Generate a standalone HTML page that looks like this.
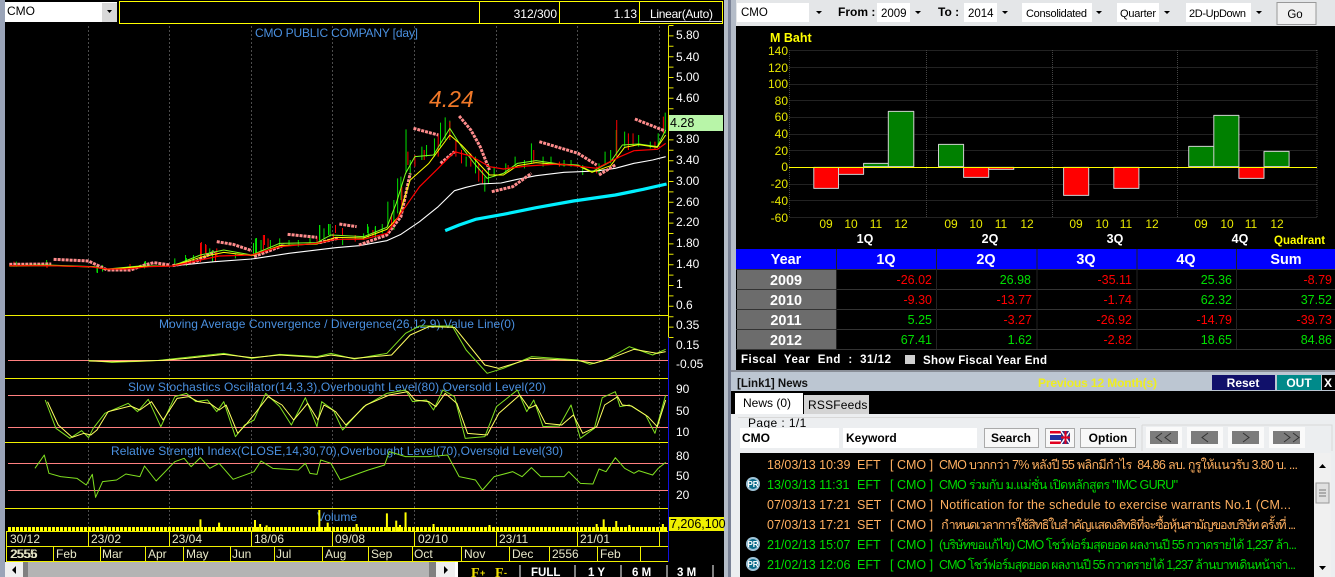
<!DOCTYPE html>
<html><head><meta charset="utf-8"><style>
html,body{margin:0;padding:0;background:#000;width:1335px;height:577px;overflow:hidden}
svg{display:block}
text{font-family:"Liberation Sans","Noto Sans CJK SC",sans-serif;font-size:12px;white-space:pre}
.n{vector-effect:non-scaling-stroke;fill:none;stroke-linejoin:round}
.ax{fill:#fff}
.bl{fill:#4a90e0}
.yl{fill:#ffff00}
.dt{fill:#e8e8c8}
.th text{fill:#fff;font-weight:bold;font-size:14.4px;text-anchor:middle}
.r{fill:#ff0000;font-size:12.5px;text-anchor:end}
.g{fill:#00e000;font-size:12.5px;text-anchor:end}
.o{fill:#ffb060;font-size:12.5px}
.m{fill:#00dc00;font-size:12.5px}
.tb{fill:#000;font-size:11px}
.b{fill:#000;font-weight:bold;font-size:12px}
.qy text{fill:#e8e800;font-size:12px;text-anchor:middle}
.q text{fill:#fff;font-weight:bold;font-size:12.5px;text-anchor:middle}
</style></head><body>
<svg width="1335" height="577" viewBox="0 0 1335 577" xmlns="http://www.w3.org/2000/svg">
<rect width="1335" height="577" fill="#000"/>
<!-- frame -->
<rect x="0" y="0" width="5" height="577" fill="#9aa4b8"/>
<rect x="724" y="0" width="12" height="577" fill="#b4bcc8"/>
<rect x="728" y="0" width="3" height="577" fill="#7a8296"/>

<!-- LEFT TOP -->
<rect x="5" y="2" width="112" height="20" fill="#fff"/>
<rect x="102" y="3" width="15" height="19" fill="#d8d8d8"/>
<path d="M107 10h5l-2.500 3z" fill="#000"/>
<text x="7" y="15" class="tb" style="font-size:12px">CMO</text>
<rect x="119.500" y="1.500" width="603" height="22" fill="#000" stroke="#ffff00"/>
<path d="M479.500 2V23M559.500 2V23M639.500 2V23" stroke="#ffff00"/>
<text x="557" y="18" fill="#fff" text-anchor="end">312/300</text>
<text x="637" y="18" fill="#fff" text-anchor="end">1.13</text>
<text x="650" y="18" fill="#fff" textLength="63">Linear(Auto)</text>
<path d="M640 21.500H722" stroke="#ddd"/>

<!-- vertical dotted grid -->
<path d="M88.500 26V531M169.500 26V531M251.500 26V531M332.500 26V531M414.500 26V531M496.500 26V531M577.500 26V531M659.500 26V531" stroke="#4c4c4c" stroke-dasharray="2 2"/>
<text x="255" y="37" class="bl" textLength="163">CMO PUBLIC COMPANY [day]</text>
<text x="429" y="107" fill="#f07828" style="font-size:23px;font-style:italic">4.24</text>

<!-- axis -->
<path d="M668.500 26V337" stroke="#e8e800"/>
<path d="M668.500 337V562" stroke="#1010e0"/>
<path d="M671 25V338" stroke="#e8e800" stroke-width="5" stroke-dasharray="1 9.4"/>
<g class="ax">
<text x="676" y="39">5.80</text><text x="676" y="61">5.40</text><text x="676" y="81">5.00</text><text x="676" y="102">4.60</text>
<text x="676" y="143">3.80</text><text x="676" y="164">3.40</text><text x="676" y="185">3.00</text><text x="676" y="206">2.60</text><text x="676" y="226">2.20</text><text x="676" y="247">1.80</text><text x="676" y="268">1.40</text><text x="676" y="288">1</text><text x="676" y="309">0.6</text>
<text x="676" y="329">0.35</text><text x="676" y="349">0.15</text><text x="676" y="368">-0.05</text>
<text x="676" y="393">90</text><text x="676" y="415">50</text><text x="676" y="436">10</text>
<text x="676" y="460">80</text><text x="676" y="480">50</text><text x="676" y="499">20</text>
</g>
<rect x="669" y="115" width="54" height="16" fill="#b8f5a8"/>
<text x="670" y="127" fill="#000" style="font-size:12.500px">4.28</text>

<!-- extra low-range candles in px -->
<path d="M97.500 268V273M256.500 238V255M253.500 243V256M319.500 225V240M328.500 224V235M367.500 224V233M375.500 226V238M212.500 250V262M186.500 258V266M145.500 261V267" stroke="#00e000"/>
<path d="M200.500 243V262M205.500 244V253M264.500 235V245M335.500 225V233M342.500 228V236M215.500 252V262M47 262V268M130 264V272" stroke="#ff0000"/>

<!-- price chart in zoom coords -->
<g transform="scale(.46616,.33333)">
<path class="n" stroke="#00e000" d="M35 785V800M100 780V798M208 800V818M220 795V815M310 785V805M375 775V795M398 765V790M415 765V785M450 745V765M505 760V775M548 715V765M560 720V760M580 720V750M600 715V740M620 720V735M640 720V740M665 705V730M686 675V725M695 685V715M708 672V710M735 715V735M780 700V720M790 680V715M805 680V712M820 672V700M832 605V680M845 600V690M853 535V640M860 530V600M871 388V520M880 480V530M905 440V480M915 435V470M932 415V470M945 368V440M955 352V420M965 362V400M1000 470V500M1020 470V520M1040 530V575M1048 490V550M1060 500V530M1085 490V520M1105 470V500M1125 480V505M1140 430V490M1165 470V500M1182 470V495M1210 480V500M1225 480V500M1250 495V525M1285 490V520M1298 455V495M1310 450V490M1322 390V460M1340 395V440M1370 405V440M1395 425V445M1412 400V440M1427 338V400"/>
<path class="n" stroke="#ff0000" d="M30 785V800M432 726V775M442 735V765M465 745V770M565 705V750M575 715V745M680 710V730M715 700V720M762 705V725M800 690V710M840 640V680M862 560V620M875 455V495M890 465V500M910 450V480M940 400V470M965 365V420M978 420V470M990 450V490M1010 460V500M1027 490V545M1035 510V550M1090 495V515M1145 450V490M1200 485V500M1280 500V520M1323 360V470M1348 400V450M1358 400V440M1405 425V450M1423 350V400"/>
<path class="n" stroke="#fff" stroke-width="1.100" d="M370 798 460 785 540 777 620 760 720 743 770 737 830 722 860 703 900 665 940 620 975 572 1000 562 1030 552 1075 549 1110 538 1150 527 1210 517 1280 513 1320 505 1360 490 1400 480 1428 470"/>
<path class="n" stroke="#00f0ff" stroke-width="3.200" d="M955 692 985 675 1020 658 1080 643 1150 623 1230 603 1320 585 1380 568 1430 552"/>
<path class="n" stroke="#ff8c8c" stroke-width="3" stroke-dasharray="3 1" d="M20 793 110 792M115 778 190 783 230 810 280 810 310 795 330 788 365 795M370 797 420 785 460 755M465 725 500 733 540 752M545 770 610 735M617 703 680 712M685 728 725 715M728 672 765 680M770 735 830 705 860 650 880 520M887 385 940 405M945 490 975 455M985 348 1010 390 1030 440 1050 510M1055 575 1100 560 1140 520M1157 425 1240 460 1280 495M1285 525 1320 495M1362 357 1425 392"/>
<path class="n" stroke="#80ff20" stroke-width="1" d="M20 797 100 795 200 800 230 807 300 798 370 798 430 765 480 750 540 765 600 730 680 728 710 705 780 710 830 682 850 610 870 520 890 470 930 465 965 385 990 440 1020 495 1045 535 1080 520 1110 490 1150 482 1200 492 1240 495 1270 515 1310 485 1335 435 1370 432 1410 440 1428 390"/>
<path class="n" stroke="#ffff00" stroke-width="1" d="M20 798 100 797 200 801 230 808 300 800 370 798 430 772 480 757 540 767 600 737 680 732 720 712 780 714 830 688 855 650 880 540 920 490 965 405 990 435 1020 480 1050 525 1080 525 1110 497 1150 488 1200 494 1240 497 1270 517 1310 497 1340 442 1370 434 1410 442 1428 405"/>
<path class="n" stroke="#ff0000" stroke-width="1.200" d="M20 797 100 797 190 800 230 807 270 807 320 800 370 798 430 780 470 768 540 765 600 740 680 730 720 718 780 718 830 700 860 640 900 560 940 505 975 455 1010 468 1050 500 1080 507 1130 498 1200 492 1280 505 1330 470 1360 452 1410 448 1428 430"/>
</g>

<!-- indicators -->
<path d="M5 315.500H668M5 378.500H668M5 442.500H668M5 508.500H668" stroke="#f0f000"/>
<path d="M8 360.500H668M8 395.500H668M8 427.500H668M8 463.500H668M8 490.500H668" stroke="#ff8080"/>
<text x="159" y="328" class="bl" textLength="356">Moving Average Convergence / Divergence(26,12,9),Value Line(0)</text>
<text x="128" y="391" class="bl" textLength="418">Slow Stochastics Oscillator(14,3,3),Overbought Level(80),Oversold Level(20)</text>
<text x="111" y="455" class="bl" textLength="452">Relative Strength Index(CLOSE,14,30,70),Overbought Level(70),Oversold Level(30)</text>
<text x="317" y="521" class="bl">Volume</text>

<g transform="translate(0,300) scale(.46616,.33333)">
<path class="n" stroke="#80e020" d="M190 181 240 187 300 184 340 181 400 172 480 160 540 175 600 163 680 170 710 160 760 177 830 160 870 100 900 78 970 78 1000 150 1045 220 1080 205 1140 170 1240 180 1265 193 1300 180 1350 140 1400 165 1428 148"/>
<path class="n" stroke="#ffff60" d="M190 183 240 185 300 183 350 181 400 175 480 163 540 173 600 165 680 172 710 165 760 175 840 165 880 105 920 80 975 82 1040 195 1070 205 1140 175 1240 182 1275 190 1310 175 1360 148 1410 160 1428 155"/>
<path class="n" stroke="#80e020" d="M97 300 120 385 150 415 175 392 190 413 200 385 225 340 275 310 295 335 318 298 345 380 375 290 400 280 420 305 445 300 465 335 480 305 505 410 525 375 545 360 570 280 600 320 625 375 655 293 680 380 690 305 715 330 735 390 780 320 830 280 870 270 885 305 915 300 930 330 950 270 975 290 998 415 1040 410 1065 320 1110 270 1130 335 1145 300 1165 380 1200 378 1225 315 1245 415 1275 385 1292 293 1320 275 1330 320 1350 315 1385 345 1405 400 1428 285"/>
<path class="n" stroke="#ffff60" d="M102 305 125 375 155 412 180 400 195 405 208 390 232 335 280 318 300 330 325 305 350 360 380 295 405 290 425 305 450 310 470 330 485 315 510 400 530 370 550 335 575 290 605 315 630 360 660 310 682 360 695 315 720 335 742 375 785 315 835 285 875 275 890 300 920 305 935 320 955 280 980 310 1003 400 1045 405 1070 340 1115 285 1135 325 1150 315 1170 370 1205 375 1230 345 1250 400 1280 380 1297 315 1325 290 1335 315 1355 318 1390 350 1410 380 1428 300"/>
<path class="n" stroke="#80e020" d="M75 505 95 465 105 520 130 530 165 535 185 555 198 523 205 592 220 545 250 540 270 522 300 530 310 498 335 543 375 485 395 475 410 500 430 473 450 505 470 490 500 538 545 515 560 483 585 505 640 510 655 490 665 520 680 523 688 480 710 490 730 540 760 525 790 510 825 495 835 455 870 470 920 470 960 465 985 530 1020 540 1035 570 1060 530 1100 515 1120 530 1140 503 1160 530 1210 530 1220 515 1245 550 1272 552 1285 507 1300 515 1320 473 1340 505 1360 520 1370 512 1400 525 1412 505 1428 487"/>
<path class="n" stroke="#ffff00" stroke-width="2" d="M430 693V658M547 693V660M558 693V672M572 693V676M685 693V630M703 693V668M765 693V672M830 693V640M850 693V662M858 693V675M870 693V637M930 693V672M1050 693V675M1280 693V672M1295 693V658M1322 693V663M1350 693V675M1422 693V672M470 693V668M225 693V680"/>
</g>
<path d="M8 529H668" stroke="#ffff00" stroke-width="4" stroke-dasharray="3 1"/>
<rect x="669" y="517" width="55" height="14" fill="#f0f000"/>
<text x="670" y="528" fill="#000" style="font-size:12.500px">7,206,100</text>

<!-- dates -->
<path d="M6 531.500H668M6 546.500H668M6 561.500H668" stroke="#f0f000"/>
<path d="M6.500 532V561M88.500 532V546M169.500 532V546M251.500 532V546M332.500 532V546M414.500 532V546M496.500 532V546M577.500 532V546M659.500 532V546M53.500 547V561M100.500 547V561M145.500 547V561M183.500 547V561M230.500 547V561M274.500 547V561M322.500 547V561M368.500 547V561M412.500 547V561M461.500 547V561M509.500 547V561M549.500 547V561M597.500 547V561M640.500 547V561" stroke="#f0f000"/>
<g class="dt">
<text x="10" y="543">30/12</text><text x="91" y="543">23/02</text><text x="172" y="543">23/04</text><text x="254" y="543">18/06</text><text x="335" y="543">09/08</text><text x="418" y="543">02/10</text><text x="499" y="543">23/11</text><text x="580" y="543">21/01</text>
<text x="10" y="558">2555</text><text x="11" y="558">2556</text><text x="56" y="558">Feb</text><text x="102" y="558">Mar</text><text x="148" y="558">Apr</text><text x="186" y="558">May</text><text x="232" y="558">Jun</text><text x="276" y="558">Jul</text><text x="325" y="558">Aug</text><text x="371" y="558">Sep</text><text x="414" y="558">Oct</text><text x="464" y="558">Nov</text><text x="512" y="558">Dec</text><text x="552" y="558">2556</text><text x="600" y="558">Feb</text>
</g>

<!-- bottom scrollbar -->
<rect x="5" y="562" width="452" height="15" fill="#b4b4b4"/>
<rect x="5" y="562" width="18" height="15" fill="#efefef"/>
<rect x="23" y="562" width="5" height="15" fill="#808080"/>
<path d="M16 566v8l-4-4z" fill="#000"/>
<rect x="429" y="562" width="7" height="15" fill="#808080"/>
<rect x="436" y="562" width="19" height="15" fill="#efefef"/>
<path d="M444 566v8l4-4z" fill="#000"/>
<rect x="455" y="562" width="3" height="15" fill="#fff"/>
<rect x="458" y="562" width="266" height="15" fill="#000"/>
<text x="471" y="577" fill="#f0e000" style="font-family:'Liberation Serif',serif;font-size:14px;font-weight:bold">F</text><text x="480" y="576" fill="#f0e000" style="font-size:9px;font-weight:bold">+</text>
<text x="495" y="577" fill="#f0e000" style="font-family:'Liberation Serif',serif;font-size:14px;font-weight:bold">F</text><text x="504" y="576" fill="#f0e000" style="font-size:9px;font-weight:bold">-</text>
<path d="M520 565V577M575 565V577M621 565V577M667 565V577M713 565V577" stroke="#fff"/>
<text x="531" y="576" fill="#fff" style="font-size:11.500px;font-weight:bold">FULL</text><text x="588" y="576" fill="#fff" style="font-size:11.500px;font-weight:bold">1 Y</text><text x="632" y="576" fill="#fff" style="font-size:11.500px;font-weight:bold">6 M</text><text x="677" y="576" fill="#fff" style="font-size:11.500px;font-weight:bold">3 M</text>

<!-- RIGHT TOOLBAR -->
<rect x="736" y="0" width="599" height="26" fill="#e4e6e8"/>
<g fill="#fff"><rect x="737" y="3" width="72" height="19"/><rect x="877" y="3" width="33" height="19"/><rect x="964" y="3" width="33" height="19"/><rect x="1022" y="3" width="70" height="19"/><rect x="1117" y="3" width="42" height="19"/><rect x="1186" y="3" width="65" height="19"/></g>
<g fill="#000"><path d="M816 11h6l-3 3zM915 11h6l-3 3zM1002 11h6l-3 3zM1096 11h6l-3 3zM1164 11h6l-3 3zM1256 11h6l-3 3z"/></g>
<text x="741" y="16" class="tb" style="font-size:11.500px">CMO</text>
<text x="838" y="16" class="b">From :</text><text x="938" y="16" class="b">To :</text>
<text x="881" y="17" class="tb" style="font-size:11.500px">2009</text><text x="968" y="17" class="tb" style="font-size:11.500px">2014</text><text x="1026" y="17" class="tb" textLength="61">Consolidated</text><text x="1120" y="17" class="tb" textLength="36">Quarter</text><text x="1189" y="17" class="tb" textLength="57">2D-UpDown</text>
<rect x="1277" y="2.500" width="39" height="22" fill="#f0f0f0" stroke="#999"/>
<text x="1295" y="18" class="tb" text-anchor="middle" style="font-size:11.500px">Go</text>

<!-- BAR CHART -->
<rect x="736" y="26" width="599" height="223" fill="#000"/>
<text x="770" y="42" fill="#ffff00" style="font-weight:bold;font-size:12.500px">M Baht</text>
<path d="M789.500 50.500H1317M789.500 67.500H1317M789.500 84.500H1317M789.500 100.500H1317M789.500 117.500H1317M789.500 134.500H1317M789.500 150.500H1317M789.500 184.500H1317M789.500 200.500H1317M789.500 217.500H1317M789.500 50V217M926.500 50V217M1052.500 50V217M1177.500 50V217M1317 50V217" stroke="#444" stroke-dasharray="1 1"/>
<text x="788" y="55" fill="#e8e800" text-anchor="end">140</text><text x="788" y="72" fill="#e8e800" text-anchor="end">120</text><text x="788" y="88" fill="#e8e800" text-anchor="end">100</text><text x="788" y="105" fill="#e8e800" text-anchor="end">80</text><text x="788" y="121" fill="#e8e800" text-anchor="end">60</text><text x="788" y="138" fill="#e8e800" text-anchor="end">40</text><text x="788" y="155" fill="#e8e800" text-anchor="end">20</text><text x="788" y="171" fill="#e8e800" text-anchor="end">0</text><text x="788" y="188" fill="#e8e800" text-anchor="end">-20</text><text x="788" y="205" fill="#e8e800" text-anchor="end">-40</text><text x="788" y="222" fill="#e8e800" text-anchor="end">-60</text>
<g transform="translate(730,0) scale(.38611,.33333)" stroke="#d0d0d0" stroke-width="1">
<path class="n" style="fill:#ff0000" d="M217 502H281V565H217ZM281 502H346V523H281ZM605 502H670V532H605ZM670 502H735V508H670ZM864 502H929V586H864ZM994 502H1059V565H994ZM1318 502H1383V535H1318Z"/>
<path class="n" style="fill:#008000" d="M346 490H410V500H346ZM410 334H476V500H410ZM540 433H605V500H540ZM1188 439H1253V500H1188ZM1253 346H1318V500H1253ZM1383 454H1448V500H1383Z"/>
</g>
<path d="M789 167.500H1317" stroke="#ffff00"/>
<g class="qy">
<text x="826" y="228">09</text><text x="851" y="228">10</text><text x="876" y="228">11</text><text x="901" y="228">12</text>
<text x="951" y="228">09</text><text x="976" y="228">10</text><text x="1001" y="228">11</text><text x="1027" y="228">12</text>
<text x="1076" y="228">09</text><text x="1102" y="228">10</text><text x="1126" y="228">11</text><text x="1152" y="228">12</text>
<text x="1201" y="228">09</text><text x="1227" y="228">10</text><text x="1251" y="228">11</text><text x="1277" y="228">12</text>
</g>
<g class="q"><text x="865" y="243">1Q</text><text x="990" y="243">2Q</text><text x="1115" y="243">3Q</text><text x="1240" y="243">4Q</text></g>
<text x="1274" y="244" fill="#ffff00" style="font-weight:bold;font-size:11.500px">Quadrant</text>

<!-- TABLE -->
<rect x="736" y="249" width="599" height="20" fill="#0000ff"/>
<rect x="737" y="269" width="99" height="80" fill="#6c6c6c"/>
<path d="M736 269.500H1335M736 289.500H1335M736 309.500H1335M736 329.500H1335M736 349.500H1335" stroke="#333"/>
<path d="M836.500 249V349M936.500 249V349M1037 249V349M1137 249V349M1236.500 249V349" stroke="#222"/>
<g class="th"><text x="786" y="264">Year</text><text x="886" y="264">1Q</text><text x="986" y="264">2Q</text><text x="1086" y="264">3Q</text><text x="1186" y="264">4Q</text><text x="1286" y="264">Sum</text>
<text x="786" y="285">2009</text><text x="786" y="305">2010</text><text x="786" y="325">2011</text><text x="786" y="345">2012</text></g>
<text x="932" y="284" class="r">-26.02</text><text x="1031" y="284" class="g">26.98</text><text x="1132" y="284" class="r">-35.11</text><text x="1232" y="284" class="g">25.36</text><text x="1332" y="284" class="r">-8.79</text>
<text x="932" y="304" class="r">-9.30</text><text x="1032" y="304" class="r">-13.77</text><text x="1132" y="304" class="r">-1.74</text><text x="1232" y="304" class="g">62.32</text><text x="1332" y="304" class="g">37.52</text>
<text x="932" y="324" class="g">5.25</text><text x="1032" y="324" class="r">-3.27</text><text x="1132" y="324" class="r">-26.92</text><text x="1232" y="324" class="r">-14.79</text><text x="1332" y="324" class="r">-39.73</text>
<text x="932" y="344" class="g">67.41</text><text x="1032" y="344" class="g">1.62</text><text x="1132" y="344" class="r">-2.82</text><text x="1232" y="344" class="g">18.65</text><text x="1332" y="344" class="g">84.86</text>
<text x="741" y="363" fill="#fff" style="font-size:11.500px;font-weight:bold" textLength="150">Fiscal  Year  End  :  31/12</text>
<rect x="905" y="355" width="10" height="9" fill="#d0d0d0"/>
<text x="923" y="364" fill="#fff" style="font-size:11.500px;font-weight:bold" textLength="124">Show Fiscal Year End</text>
<rect x="731" y="370" width="604" height="2" fill="#8a8f98"/>

<!-- NEWS HEADER -->
<rect x="731" y="372" width="604" height="19" fill="#bcc6d2"/>
<text x="737" y="387" fill="#111" style="font-weight:bold;font-size:11.500px">[Link1] News</text>
<text x="1038" y="387" fill="#eeee20" style="font-weight:bold;font-size:12px" textLength="119">Previous 12 Month(s)</text>
<rect x="1212" y="375" width="63" height="15" fill="#10106a"/>
<text x="1243" y="387" fill="#fff" text-anchor="middle" style="font-weight:bold;font-size:12px">Reset</text>
<rect x="1277" y="375" width="44" height="15" fill="#008a8a"/>
<text x="1299" y="387" fill="#fff" text-anchor="middle" style="font-weight:bold;font-size:12px">OUT</text>
<rect x="1322" y="375" width="13" height="15" fill="#000"/>
<text x="1324" y="387" fill="#fff" style="font-weight:bold;font-size:12px">X</text>

<!-- TABS -->
<rect x="731" y="391" width="604" height="23" fill="#000"/>
<rect x="735" y="393" width="68" height="21" fill="#fff"/>
<rect x="804" y="395" width="65" height="19" fill="#d4d4d4"/>
<text x="743" y="407" fill="#000" style="font-size:12px">News (0)</text>
<text x="808" y="409" fill="#000" style="font-size:12px;letter-spacing:.2px">RSSFeeds</text>

<!-- NEWS PANEL -->
<rect x="731" y="414" width="604" height="163" fill="#eceef0"/>
<path d="M738 417.500H1140M1142 425V451M1142 425H1332V451" stroke="#d8d8d8" fill="none"/>
<text x="748" y="427" fill="#000" style="font-size:12px;letter-spacing:.4px">Page : 1/1</text>
<rect x="740" y="428" width="99" height="20" fill="#fff"/>
<rect x="843" y="428" width="134" height="20" fill="#fff"/>
<text x="742" y="442" class="b">CMO</text>
<text x="846" y="442" class="b">Keyword</text>
<rect x="984.500" y="428.500" width="54" height="19" fill="#f8f8f8" stroke="#aaa"/>
<text x="1011" y="442" class="b" text-anchor="middle">Search</text>
<rect x="1045.500" y="428.500" width="29" height="19" fill="#f8f8f8" stroke="#aaa"/>
<rect x="1050" y="431" width="20" height="13" fill="#e00020"/>
<rect x="1050" y="433.500" width="20" height="8" fill="#fff"/>
<rect x="1050" y="435" width="20" height="5" fill="#2030a0"/>
<rect x="1061" y="431" width="9" height="13" fill="#303080"/>
<path d="M1061 431l9 13M1070 431l-9 13" stroke="#fff" stroke-width="1.500"/>
<path d="M1065.500 431v13M1061 437.500h9" stroke="#e00020" stroke-width="2"/>
<rect x="1080.500" y="428.500" width="55" height="19" fill="#f8f8f8" stroke="#aaa"/>
<text x="1108" y="442" class="b" text-anchor="middle">Option</text>
<g fill="#fafafa"><rect x="1146" y="427" width="36" height="21"/><rect x="1187" y="427" width="36" height="21"/><rect x="1228" y="427" width="36" height="21"/><rect x="1269" y="427" width="36" height="21"/></g>
<g fill="#7c7c7c"><rect x="1150" y="431" width="28" height="13"/><rect x="1191" y="431" width="27" height="13"/><rect x="1232" y="431" width="27" height="13"/><rect x="1273" y="431" width="27" height="13"/></g>
<path d="M1162 433l-6 4.500 6 4.500M1171 433l-6 4.500 6 4.500M1208 433l-6 4.500 6 4.500M1243 433l6 4.500-6 4.500M1284 433l6 4.500-6 4.500M1293 433l6 4.500-6 4.500" fill="none" stroke="#333"/>

<!-- NEWS LIST -->
<rect x="740" y="453" width="574" height="124" fill="#000"/>
<rect x="1314" y="453" width="17" height="124" fill="#f0f0f0"/>
<path d="M1319 468h7l-3.500-4zM1319 566h7l-3.500 4z" fill="#000"/>
<rect x="1316" y="483" width="13" height="20" fill="#e0e0e0" stroke="#999"/>
<path d="M1319 490h7M1319 493h7M1319 496h7" stroke="#777"/>
<text x="767" y="469" class="o">18/03/13 10:39</text><text x="857" y="469" class="o">EFT</text><text x="890" y="469" class="o">[ CMO ]</text><text x="939" y="469" class="o" textLength="359">CMO บวกกว่า 7% หลังปี 55 พลิกมีกำไร  84.86 ลบ. กูรูให้แนวรับ 3.80 บ. ...</text>
<text x="767" y="489" class="m">13/03/13 11:31</text><text x="857" y="489" class="m">EFT</text><text x="890" y="489" class="m">[ CMO ]</text><text x="939" y="489" class="m" textLength="239">CMO ร่วมกับ ม.แม่ชั่น เปิดหลักสูตร "IMC GURU"</text>
<text x="767" y="509" class="o">07/03/13 17:21</text><text x="857" y="509" class="o">SET</text><text x="890" y="509" class="o">[ CMO ]</text><text x="940" y="509" class="o" textLength="351">Notification for the schedule to exercise warrants No.1 (CM...</text>
<text x="767" y="529" class="o">07/03/13 17:21</text><text x="857" y="529" class="o">SET</text><text x="890" y="529" class="o">[ CMO ]</text><text x="940" y="529" class="o" textLength="355">กำหนดเวลาการใช้สิทธิใบสำคัญแสดงสิทธิที่จะซื้อหุ้นสามัญของบริษัท ครั้งที่ ...</text>
<text x="767" y="549" class="m">21/02/13 15:07</text><text x="857" y="549" class="m">EFT</text><text x="890" y="549" class="m">[ CMO ]</text><text x="939" y="549" class="m" textLength="358">(บริษัทขอแก้ไข) CMO โชว์ฟอร์มสุดยอด ผลงานปี 55 กวาดรายได้ 1,237 ล้า...</text>
<text x="767" y="569" class="m">21/02/13 12:06</text><text x="857" y="569" class="m">EFT</text><text x="890" y="569" class="m">[ CMO ]</text><text x="939" y="569" class="m" textLength="357">CMO โชว์ฟอร์มสุดยอด ผลงานปี 55 กวาดรายได้ 1,237 ล้านบาทเดินหน้าจ่า...</text>
<circle cx="753" cy="484" r="7" fill="#9fc4d8"/><circle cx="753" cy="484" r="5" fill="#0a6a88"/><text x="753" y="487" fill="#fff" text-anchor="middle" style="font-size:8px;font-weight:bold">PR</text>
<circle cx="753" cy="544" r="7" fill="#9fc4d8"/><circle cx="753" cy="544" r="5" fill="#0a6a88"/><text x="753" y="547" fill="#fff" text-anchor="middle" style="font-size:8px;font-weight:bold">PR</text>
<circle cx="753" cy="564" r="7" fill="#9fc4d8"/><circle cx="753" cy="564" r="5" fill="#0a6a88"/><text x="753" y="567" fill="#fff" text-anchor="middle" style="font-size:8px;font-weight:bold">PR</text>
</svg>
</body></html>
